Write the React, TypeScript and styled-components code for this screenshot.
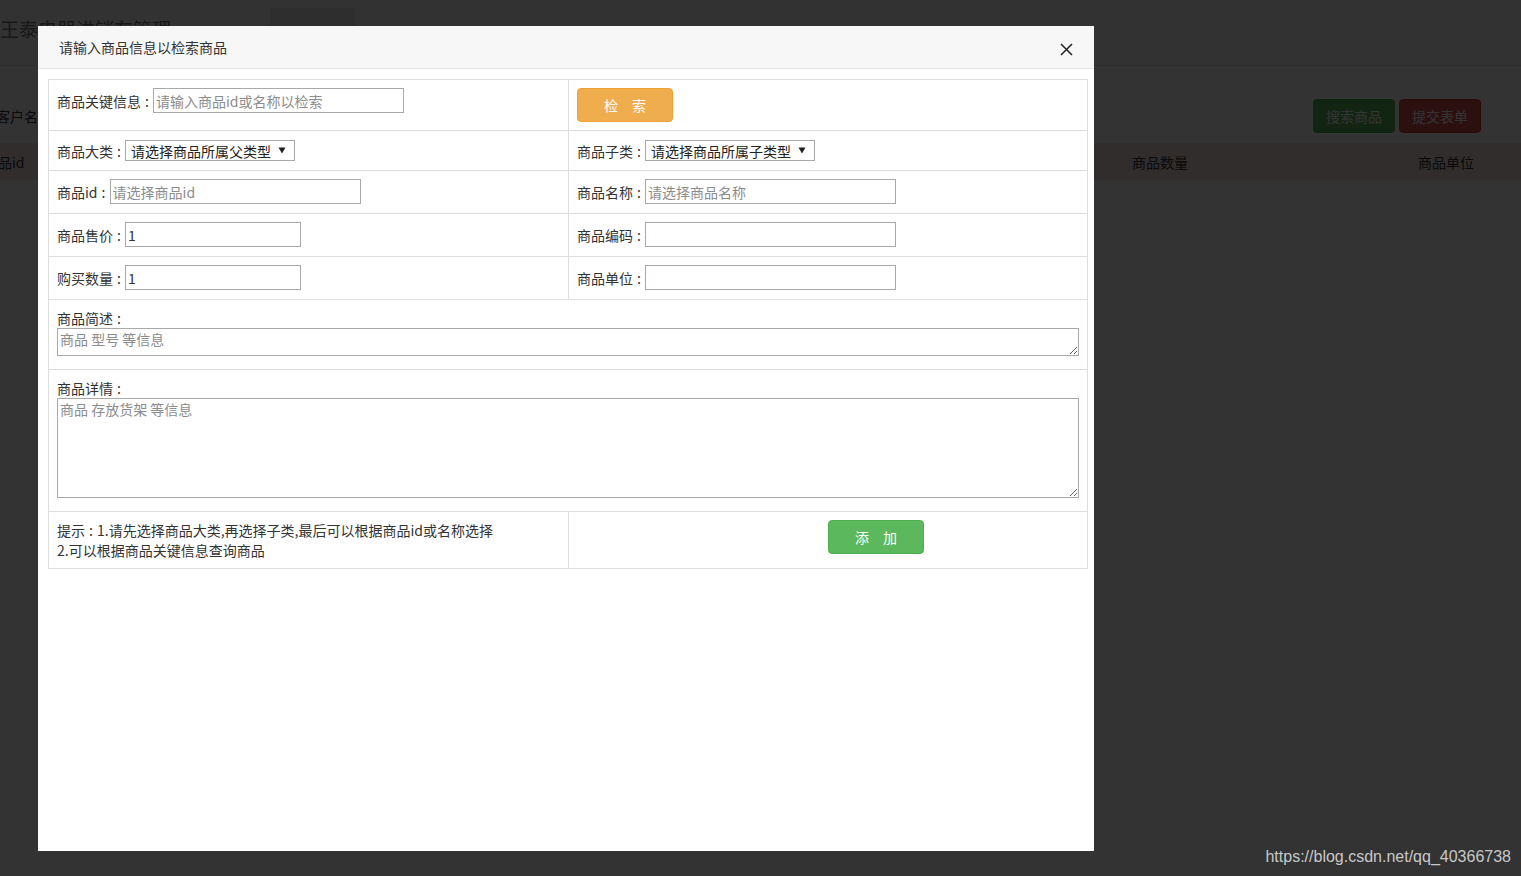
import React from "react";
import styled, { createGlobalStyle } from "styled-components";

const Global = createGlobalStyle`
  html, body { margin: 0; padding: 0; }
  body {
    width: 1521px; height: 876px; overflow: hidden; background: #fff;
    font-family: "Noto Sans CJK SC", "Liberation Sans", sans-serif;
    font-size: 14px; color: #333;
  }
  * { box-sizing: border-box; }
`;

const Page = styled.div`
  position: relative;
  width: 1521px;
  height: 876px;
  background: #fff;
`;

const PageHeader = styled.div`
  height: 66px;
  border-bottom: 1px solid #e7e7e7;
  display: flex;
  align-items: flex-start;
  background: #f8f8f8;
`;

const Brand = styled.div`
  font-size: 19px;
  color: #777;
  padding-top: 15px;
  width: 270px;
`;

const NavTab = styled.div`
  margin-top: 8px;
  width: 85px;
  height: 18px;
  background: #e7e7e7;
`;

const Toolbar = styled.div`
  height: 77px;
  display: flex;
  align-items: flex-end;
  justify-content: space-between;
  padding: 0 40px 10px 0;
`;

const ToolLabel = styled.div`
  font-size: 14px;
  color: #333;
  margin-left: -4px;
  line-height: 34px;
`;

const ToolBtns = styled.div`
  display: flex;
  gap: 4px;
`;

const PageBtn = styled.div<{ $bg: string; $bd: string }>`
  width: 82px;
  height: 34px;
  border-radius: 4px;
  background: ${(p) => p.$bg};
  border: 1px solid ${(p) => p.$bd};
  color: #fff;
  font-size: 14px;
  display: flex;
  align-items: center;
  justify-content: center;
`;

const TableHead = styled.div`
  height: 37px;
  background: #f2dede;
  display: grid;
  grid-template-columns: 1132px 286px 1fr;
  align-items: center;
  font-size: 14px;
  color: #333;
`;

const HeadCell = styled.div<{ $shift?: number }>`
  margin-left: ${(p) => p.$shift ?? 0}px;
`;

const Backdrop = styled.div`
  position: absolute;
  inset: 0;
  background: rgba(0, 0, 0, 0.8);
`;

const Modal = styled.div`
  position: absolute;
  left: 38px;
  top: 26px;
  width: 1056px;
  height: 825px;
  background: #fff;
  display: flex;
  flex-direction: column;
`;

const ModalHeader = styled.div`
  height: 43px;
  background: #f7f7f7;
  border-bottom: 1px solid #e5e5e5;
  display: flex;
  align-items: center;
  justify-content: space-between;
  padding: 0 20px 0 21px;
`;

const ModalTitle = styled.div`
  font-size: 14px;
  color: #333;
  margin-top: -1px;
`;

const Close = styled.div`
  width: 14px;
  height: 14px;
  display: flex;
  margin-top: 6px;
`;

const ModalBody = styled.div`
  padding: 10px;
`;

const Table = styled.div`
  width: 1040px;
  border: 1px solid #ddd;
  border-bottom: none;
  display: grid;
  grid-template-columns: 519px 1fr;
`;

const Cell = styled.div<{ $span?: boolean; $h: number; $right?: boolean }>`
  grid-column: ${(p) => (p.$span ? "1 / span 2" : "auto")};
  height: ${(p) => p.$h}px;
  border-bottom: 1px solid #ddd;
  border-left: ${(p) => (p.$right ? "1px solid #ddd" : "none")};
  padding: 8px 8px 0 8px;
`;

const Line = styled.div<{ $h?: number }>`
  display: flex;
  align-items: center;
  height: ${(p) => p.$h ?? 25}px;
`;

const Label = styled.span`
  white-space: nowrap;
  color: #333;
`;

const Colon = styled.span`
  display: inline-block;
  width: 12px;
  text-align: center;
`;

const Input = styled.input<{ $w: number }>`
  width: ${(p) => p.$w}px;
  height: 25px;
  border: 1px solid #a9a9a9;
  padding: 0 2px;
  font: inherit;
  font-size: 14px;
  color: #333;
  outline: none;
  &::placeholder { color: #8c8c8c; }
`;

const Select = styled.div<{ $w: number }>`
  width: ${(p) => p.$w}px;
  height: 21px;
  border: 1px solid #a9a9a9;
  display: flex;
  align-items: center;
  justify-content: space-between;
  padding: 0 8px 0 5px;
  color: #222;
  font-size: 14px;
`;

const Caret = styled.svg`
  flex: none;
`;

const BlockLabel = styled.div`
  line-height: 20px;
`;

const Area = styled.textarea<{ $h: number }>`
  display: block;
  width: 100%;
  height: ${(p) => p.$h}px;
  border: 1px solid #a9a9a9;
  padding: 1px 2px;
  font: inherit;
  font-size: 14px;
  line-height: 19px;
  color: #333;
  resize: vertical;
  outline: none;
  &::placeholder { color: #8c8c8c; }
`;

const Btn = styled.div<{ $bg: string; $bd: string; $w: number; $h: number }>`
  width: ${(p) => p.$w}px;
  height: ${(p) => p.$h}px;
  background: ${(p) => p.$bg};
  border: 1px solid ${(p) => p.$bd};
  border-radius: 4px;
  color: #fff;
  font-size: 14px;
  display: flex;
  align-items: center;
  justify-content: center;
  white-space: pre;
`;

const Tip = styled.div`
  line-height: 20px;
  font-size: 14px;
`;

const AddWrap = styled.div`
  padding-left: 251px;
`;

const Watermark = styled.div`
  position: absolute;
  right: 10px;
  bottom: 10px;
  font-family: "Liberation Sans", Arial, sans-serif;
  font-size: 16px;
  color: #c8c8c8;
`;

const Arrow = () => (
  <Caret width="8" height="7" viewBox="0 0 8 7">
    <path d="M0.5 0.5 L7.5 0.5 L4 6.5 Z" fill="#222" />
  </Caret>
);

const L = ({ t }: { t: string }) => (
  <Label>
    {t}
    <Colon>:</Colon>
  </Label>
);

export default function App() {
  return (
    <Page>
      <Global />
      <PageHeader>
        <Brand>王泰电器进销存管理</Brand>
        <NavTab />
      </PageHeader>
      <Toolbar>
        <ToolLabel>客户名称</ToolLabel>
        <ToolBtns>
          <PageBtn $bg="#5cb85c" $bd="#4cae4c">搜索商品</PageBtn>
          <PageBtn $bg="#d9534f" $bd="#d43f3a">提交表单</PageBtn>
        </ToolBtns>
      </Toolbar>
      <TableHead>
        <HeadCell $shift={-2}>品id</HeadCell>
        <HeadCell>商品数量</HeadCell>
        <HeadCell>商品单位</HeadCell>
      </TableHead>
      <Backdrop />
      <Modal>
        <ModalHeader>
          <ModalTitle>请输入商品信息以检索商品</ModalTitle>
          <Close>
            <svg width="13" height="13" viewBox="0 0 13 13">
              <path d="M1 1 L12 12 M12 1 L1 12" stroke="#222" strokeWidth="1.5" />
            </svg>
          </Close>
        </ModalHeader>
        <ModalBody>
          <Table>
            <Cell $h={51}>
              <Line>
                <L t="商品关键信息" />
                <Input $w={251} placeholder="请输入商品id或名称以检索" />
              </Line>
            </Cell>
            <Cell $h={51} $right>
              <Btn $bg="#f0ad4e" $bd="#eea236" $w={96} $h={34}>{"检\u3000索"}</Btn>
            </Cell>

            <Cell $h={40}>
              <Line $h={23}>
                <L t="商品大类" />
                <Select $w={170}>请选择商品所属父类型<Arrow /></Select>
              </Line>
            </Cell>
            <Cell $h={40} $right>
              <Line $h={23}>
                <L t="商品子类" />
                <Select $w={170}>请选择商品所属子类型<Arrow /></Select>
              </Line>
            </Cell>

            <Cell $h={43}>
              <Line>
                <L t="商品id" />
                <Input $w={251} placeholder="请选择商品id" />
              </Line>
            </Cell>
            <Cell $h={43} $right>
              <Line>
                <L t="商品名称" />
                <Input $w={251} placeholder="请选择商品名称" />
              </Line>
            </Cell>

            <Cell $h={43}>
              <Line>
                <L t="商品售价" />
                <Input $w={176} defaultValue="1" />
              </Line>
            </Cell>
            <Cell $h={43} $right>
              <Line>
                <L t="商品编码" />
                <Input $w={251} />
              </Line>
            </Cell>

            <Cell $h={43}>
              <Line>
                <L t="购买数量" />
                <Input $w={176} defaultValue="1" />
              </Line>
            </Cell>
            <Cell $h={43} $right>
              <Line>
                <L t="商品单位" />
                <Input $w={251} />
              </Line>
            </Cell>

            <Cell $span $h={70}>
              <BlockLabel>
                <L t="商品简述" />
              </BlockLabel>
              <Area $h={28} placeholder="商品 型号 等信息" />
            </Cell>

            <Cell $span $h={142}>
              <BlockLabel>
                <L t="商品详情" />
              </BlockLabel>
              <Area $h={100} placeholder="商品 存放货架 等信息" />
            </Cell>

            <Cell $h={57}>
              <Tip>
                提示<Colon>:</Colon>1.请先选择商品大类,再选择子类,最后可以根据商品id或名称选择
                <br />
                2.可以根据商品关键信息查询商品
              </Tip>
            </Cell>
            <Cell $h={57} $right>
              <AddWrap>
                <Btn $bg="#5cb85c" $bd="#4cae4c" $w={96} $h={34}>{"添\u3000加"}</Btn>
              </AddWrap>
            </Cell>
          </Table>
        </ModalBody>
      </Modal>
      <Watermark>https://blog.csdn.net/qq_40366738</Watermark>
    </Page>
  );
}
